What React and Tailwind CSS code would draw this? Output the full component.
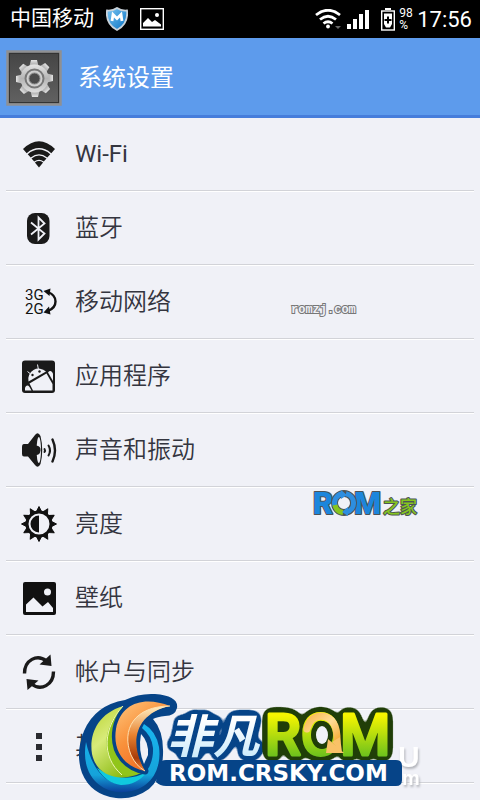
import React from "react";

const Wifi = () => (
  <svg viewBox="0 0 36 36" className="size-9" fill="#1a1a1a">
    <path d="M2 13 Q18 -2.500 34 13 L30.300 17.200 Q18 7 5.700 17.200 Z" />
    <path d="M6.700 18.200 Q18 9 29.300 18.200 L26.300 21.400 Q18 15 9.700 21.400 Z" />
    <path d="M10.500 22.400 Q18 16.800 25.500 22.400 L22.800 25.400 Q18 22 13.200 25.400 Z" />
    <path d="M13.900 26.400 Q18 23.600 22.100 26.400 L18 31.500 Z" />
  </svg>
);

const Bluetooth = () => (
  <svg viewBox="0 0 36 36" className="size-9">
    <rect x="6" y="3" width="22.500" height="31" rx="8" fill="#1a1a1a" />
    <path d="M10 12.500 L23.500 23.500 L17.500 29.500 V7.500 L23.500 13.500 L10 24.500" fill="none" stroke="#f0f1f7" strokeWidth="1.800" />
  </svg>
);

const Network = () => (
  <svg viewBox="0 0 36 36" className="size-9">
    <g fill="#111" fontFamily="Roboto, sans-serif" fontSize="15" fontWeight="400">
      <text x="4" y="16">3G</text>
      <text x="4" y="30">2G</text>
    </g>
    <path d="M27 8 Q34.500 11 34.500 17.500 Q34.500 24 27 27" fill="none" stroke="#111" strokeWidth="2.400" />
    <path d="M22.500 7 L29.500 4.500 L28.500 12 Z M22.500 28.500 L28 22.500 L29.500 30.500 Z" fill="#111" />
  </svg>
);

const Android = () => (
  <svg viewBox="0 0 36 36" className="size-9">
    <rect x="1" y="2.500" width="33" height="32.500" rx="3" fill="#1a1a1a" />
    <g fill="#f0f1f7">
      <path d="M7.500 23.500 A10.500 10.500 0 0 1 25 13.500 Z" />
      <path d="M8.500 25.500 L25.500 15.500 L31.500 26 V32.500 H12 Z" />
      <path d="M27 14.500 Q29 12 31 14 L32 15.500 V23 Z" />
      <path d="M4 29.500 Q6 26 8.500 29 L10.500 32.500 H4 Z" />
    </g>
    <path d="M17.500 12 L16.500 6.500 M9 15.500 L6.500 13.500" stroke="#f0f1f7" />
    <circle cx="11.500" cy="17" r="1.200" fill="#1a1a1a" />
    <circle cx="18.500" cy="13.500" r="1.200" fill="#1a1a1a" />
  </svg>
);

const Sound = () => (
  <svg viewBox="0 0 36 36" className="size-9">
    <path d="M1 15 Q1 12 3 12 H7 L14 3 Q17 -1 19.500 4 Q23 18 19.500 32 Q17 37 14 33 L7 24.500 H3 Q1 24.500 1 22 Z" fill="#1a1a1a" />
    <ellipse cx="17.800" cy="18" rx="2.200" ry="13" fill="#f0f1f7" />
    <path d="M15 13.500 Q20 14 19.500 18.500 Q19 23 15 23 Z" fill="#1a1a1a" />
    <g fill="none" stroke="#1a1a1a" strokeLinecap="round" strokeWidth="2">
      <path d="M23.500 17 Q24.500 18.500 23.500 20" />
      <path d="M27.500 13.500 Q30.500 18.500 27.500 23.500" />
      <path d="M31.500 7.500 Q36.500 18.500 31.500 29.500" strokeWidth="2.400" />
    </g>
  </svg>
);

const Brightness = () => (
  <svg viewBox="0 0 36 36" className="size-9">
    <g fill="#111">
      {[0, 30, 60, 90, 120, 150, 180, 210, 240, 270, 300, 330].map((a) => (
        <path key={a} d="M18 .500 L20.800 6 H15.200 Z" stroke="#111" strokeLinejoin="round" transform={`rotate(${a} 18 18)`} />
      ))}
    </g>
    <circle cx="18" cy="18" r="12" fill="none" stroke="#111" strokeWidth="3" />
    <path d="M18 9.500 A8.500 8.500 0 0 0 18 26.500 Z" fill="#111" />
  </svg>
);

const Wallpaper = () => (
  <svg viewBox="0 0 36 36" className="size-9">
    <rect x="2" y="2" width="33" height="33" rx="2" fill="#111" />
    <path d="M5 32 V24.500 L12.500 17.500 L21.500 26.500 L27 22 L32 28 V32 Z" fill="#f0f1f7" />
    <circle cx="26.500" cy="12" r="3.500" fill="#f0f1f7" />
  </svg>
);

const Sync = () => (
  <svg viewBox="0 0 36 36" className="size-9" fill="none" stroke="#1a1a1a" strokeWidth="3.400">
    <path d="M3.500 19.500 C3.500 6 16 -.5 25.500 7" />
    <path d="M32.500 17.500 C32.500 31 20 37.500 10.500 30" />
    <path d="M29.500 .500 L30.500 12 L18.500 10.500 Z M6.500 36 L5.500 25 L17.500 26.500 Z" fill="#1a1a1a" stroke="none" />
  </svg>
);

const More = () => (
  <svg viewBox="0 0 36 36" className="size-9" fill="#2a2b30">
    <rect x="15" y="5" width="6" height="6" />
    <rect x="15" y="16" width="6" height="6" />
    <rect x="15" y="27" width="6" height="6" />
  </svg>
);

const items = [
  ["Wi-Fi", Wifi, "font-normal"],
  ["蓝牙", Bluetooth, "font-[350]"],
  ["移动网络", Network, "font-[350]"],
  ["应用程序", Android, "font-[350]"],
  ["声音和振动", Sound, "font-[350]"],
  ["亮度", Brightness, "font-[350]"],
  ["壁纸", Wallpaper, "font-[350]"],
  ["帐户与同步", Sync, "font-[350]"],
  ["其他", More, "font-[350]"],
];

function StatusBar() {
  return (
    <div className="flex h-[38px] items-center bg-black pr-2 pl-2.5 text-white">
      <span className="text-[21px]">中国移动</span>
      <svg viewBox="0 0 22 24" className="ml-3 h-6 w-[22px]">
        <defs>
          <linearGradient id="shield" x2="1" y2="1">
            <stop stopColor="#7cc6f2" />
            <stop offset="1" stopColor="#0872c4" />
          </linearGradient>
        </defs>
        <path d="M1 3.500 Q7 4 11 1 Q15 4 21 3.500 Q22.500 17 11 23 Q-.5 17 1 3.500 Z" fill="url(#shield)" stroke="#c9d2da" strokeWidth="1.800" />
        <path d="M6 14 L7 7.500 L11 11.500 L15 7.500 L16 14" fill="none" stroke="#fff" strokeWidth="2.800" />
      </svg>
      <svg viewBox="0 0 24 22" className="ml-3 h-[22px] w-6">
        <rect x=".700" y=".700" width="22.600" height="20.600" fill="none" stroke="#fff" strokeWidth="1.400" />
        <path d="M3 18.500 V15 L8 10 L12 14 L15 12 L21 16.500 V18.500 Z" fill="#fff" />
        <circle cx="17" cy="7" r="2" fill="#fff" />
      </svg>
      <svg viewBox="0 0 26 20" className="ml-auto h-5 w-[26px]" fill="none" stroke="#fff" strokeWidth="2.800">
        <path d="M1 6 Q13 -3.500 25 6" />
        <path d="M5 10.500 Q13 4 21 10.500" />
        <path d="M8.500 14.500 Q13 11 17.500 14.500" />
        <circle cx="13" cy="17.500" r="1.900" fill="#fff" stroke="none" />
        <path d="M20 17 H26 L23 20 Z" fill="#666" stroke="none" />
      </svg>
      <svg viewBox="0 0 22 20" className="ml-1.5 h-5 w-[22px]" fill="#fff">
        <rect y="15" width="4" height="5" />
        <rect x="6" y="10" width="4" height="10" />
        <rect x="12" y="5" width="4" height="15" />
        <rect x="18" y="1" width="4" height="19" />
      </svg>
      <svg viewBox="0 0 14 24" className="ml-3 h-6 w-3.5">
        <rect x="4" y="1" width="6" height="2" fill="#fff" />
        <rect x=".700" y="4" width="12.600" height="19" fill="none" stroke="#fff" strokeWidth="1.400" />
        <path d="M3 6.500 H11 V17 L9 20.500 H5 L3 17 Z" fill="#fff" />
        <path d="M7 9.500 V16.500 M3.500 13 H10.500" stroke="#000" strokeWidth="2" />
      </svg>
      <span className="ml-1 flex w-3.5 flex-col text-xs leading-3">
        <span>98</span>
        <span>%</span>
      </span>
      <span className="ml-1 font-[Roboto,sans-serif] text-[22px]">17:56</span>
    </div>
  );
}

function GearIcon() {
  return (
    <svg viewBox="0 0 56 56" className="size-14">
      <defs>
        <linearGradient id="tile" x2="0" y2="1">
          <stop stopColor="#444" />
          <stop offset="1" stopColor="#626262" />
        </linearGradient>
        <linearGradient id="gear" x2="0" y2="1">
          <stop stopColor="#e4e4e4" />
          <stop offset=".5" stopColor="#b4b4b4" />
          <stop offset="1" stopColor="#dedede" />
        </linearGradient>
      </defs>
      <rect x="1.500" y="1.500" width="53" height="53" fill="url(#tile)" stroke="#8f9092" strokeWidth="2.500" />
      <rect x="3.500" y="3.500" width="49" height="49" fill="none" stroke="#333" />
      <g fill="url(#gear)">
        {[0, 45, 90, 135, 180, 225, 270, 315].map((a) => (
          <path key={a} d="M25 10 H31 L33 18 H23 Z" transform={`rotate(${a} 28.5 28.5)`} />
        ))}
        <circle cx="28.500" cy="28.500" r="14" />
      </g>
      <circle cx="28.500" cy="28.500" r="9" fill="#cfcfcf" stroke="#777" strokeWidth="2" />
      <circle cx="28.500" cy="28.500" r="5.500" fill="#4b4b4b" stroke="#8a8a8a" />
    </svg>
  );
}

function RomHome() {
  return (
    <svg viewBox="0 -6 112 46" className="pointer-events-none absolute top-[481px] left-[310px] h-[46px] w-28">
      <g strokeLinejoin="round" paintOrder="stroke" stroke="#4c5357" strokeWidth="2">
        <text x="3" y="27" fontFamily="Roboto, sans-serif" fontWeight="900" fontSize="31" fill="#1c86dc">R</text>
        <text x="44" y="27" fontFamily="Roboto, sans-serif" fontWeight="900" fontSize="31" fill="#1c86dc">M</text>
        <circle cx="34" cy="16" r="9.500" fill="none" strokeWidth="7" />
        <text x="73" y="26" fontFamily="'Noto Sans CJK SC', sans-serif" fontWeight="500" fontSize="17" fill="#86c51f">之家</text>
      </g>
      <path d="M32 6.700 A9.500 9.500 0 0 0 25 19" fill="none" stroke="#2d8ee0" strokeWidth="5" />
      <path d="M25 18 A9.500 9.500 0 0 0 33 25.500" fill="none" stroke="#86c51f" strokeWidth="5" />
      <path d="M36 6.700 A9.500 9.500 0 0 1 36 25.300" fill="none" stroke="#2d8ee0" strokeWidth="5" />
      <path d="M31 3 L37 8 L31 12 Z M38 20 L32 25 L38 29 Z" fill="#2d8ee0" />
    </svg>
  );
}

function CrskyLogo() {
  return (
    <svg viewBox="76 690 350 110" className="pointer-events-none absolute top-[690px] left-[76px] h-[110px] w-[350px]">
      <defs>
        <linearGradient id="orange" x1="0" y1="0" x2=".6" y2="1">
          <stop stopColor="#ffc77e" />
          <stop offset=".5" stopColor="#f9923c" />
          <stop offset="1" stopColor="#ef6a22" />
        </linearGradient>
        <linearGradient id="orangeInner" x2="0" y2="1">
          <stop stopColor="#fff0c4" />
          <stop offset=".45" stopColor="#e8812e" />
          <stop offset=".8" stopColor="#a83b09" />
          <stop offset="1" stopColor="#f58a3c" />
        </linearGradient>
        <linearGradient id="lime" x2=".6" y2="1">
          <stop stopColor="#b9d32e" />
          <stop offset=".45" stopColor="#d8eb7a" />
          <stop offset="1" stopColor="#8aba12" />
        </linearGradient>
        <linearGradient id="ring" x2="0" y2="1">
          <stop stopColor="#19b6ef" />
          <stop offset=".75" stopColor="#15a3da" />
          <stop offset="1" stopColor="#0a3f9a" />
        </linearGradient>
        <linearGradient id="ice" x2="0" y2="1">
          <stop offset=".3" stopColor="#fff" />
          <stop offset="1" stopColor="#bfe6fa" />
        </linearGradient>
        <linearGradient id="leaf" x2="0" y2="1">
          <stop offset=".2" stopColor="#f6f500" />
          <stop offset=".8" stopColor="#6fc21c" />
        </linearGradient>
        <linearGradient id="gold" x2="1" y2="1">
          <stop stopColor="#f8b952" />
          <stop offset=".5" stopColor="#ffdc96" />
          <stop offset="1" stopColor="#f4ab35" />
        </linearGradient>
        <filter id="navyOutline" x="-20%" y="-20%" width="140%" height="140%" colorInterpolationFilters="sRGB">
          <feGaussianBlur in="SourceAlpha" stdDeviation="4" />
          <feComponentTransfer result="grown">
            <feFuncA type="linear" slope="20" intercept="-1.200" />
          </feComponentTransfer>
          <feFlood floodColor="#064488" />
          <feComposite in2="grown" operator="in" />
          <feMerge>
            <feMergeNode />
            <feMergeNode in="SourceGraphic" />
          </feMerge>
        </filter>
        <filter id="greenOutline" x="-20%" y="-20%" width="140%" height="140%" colorInterpolationFilters="sRGB">
          <feGaussianBlur in="SourceAlpha" stdDeviation="4" />
          <feComponentTransfer result="grown">
            <feFuncA type="linear" slope="20" intercept="-1.500" />
          </feComponentTransfer>
          <feFlood floodColor="#203e08" />
          <feComposite in2="grown" operator="in" />
          <feMerge>
            <feMergeNode />
            <feMergeNode in="SourceGraphic" />
          </feMerge>
        </filter>
      </defs>

      <g fontFamily="'Liberation Sans', Arial, sans-serif" fontWeight="700" fill="#fff" className="drop-shadow-[1px_2px_1px_#b0b2b8]">
        <text x="398" y="767" fontSize="30">U</text>
        <text x="402" y="785" fontSize="20">m</text>
      </g>

      <path
        d="M125 700 Q139 693 155 694 Q179 696 177 708 Q175 716 165 716 Q157 717 153 719 Q164 731 163 755 Q162 778 149 789 Q134 800 116 798 Q91 795 82 773 Q75 753 84 731 Q95 705 125 700 Z"
        fill="#064488"
      />
      <path d="M86 742 C80 775 101 794 125 792 C151 790 162 769 159 747 Q156 731 144 724 L142 728 Q152 736 153 748 C154 769 140 783 122 784 C103 784 91 765 86 742 Z" fill="url(#ring)" />
      <path d="M97 768 Q123 785 147 772 Q137 785 121 785 Q106 783 97 768 Z" fill="#10c9de" />
      <path d="M141 734 Q149 742 148 755 L144 764 Q138 750 141 734 Z" fill="#f0f1f7" />
      <path d="M123 706 C97 714 89 735 92 754 C97 778 122 782 141 773 C118 771 102 736 123 706 Z" fill="url(#lime)" />
      <path d="M123 706 C103 727 99 756 122 775 Q132 777 141 773 C119 767 106 735 123 706 Z" fill="#91c51a" />
      <path d="M123 706 C104 727 100 756 122 775" fill="none" stroke="#f0f7b8" />
      <path d="M170 706 C145 696 121 702 116 729 C112 754 128 768 145 771 C126 750 119 721 170 706 Z" fill="#064488" stroke="#064488" strokeWidth="7" strokeLinejoin="round" />
      <path d="M170 706 C145 696 121 702 116 729 C112 754 128 768 145 771 C128 745 133 713 170 706 Z" fill="url(#orange)" />
      <path d="M170 706 C134 706 121 730 131 755 Q136 766 145 771 C129 744 134 714 170 706 Z" fill="url(#orangeInner)" />
      <path d="M170 706 C134 706 121 730 131 755 Q136 766 145 771" fill="none" stroke="#ffe0b0" />

      <text x="167" y="753" fontFamily="'Noto Sans CJK SC', sans-serif" fontWeight="700" fontStyle="italic" fontSize="46" fill="url(#ice)" filter="url(#navyOutline)">
        非凡
      </text>
      <g filter="url(#greenOutline)">
        <text x="265" y="755" fontFamily="Roboto, sans-serif" fontWeight="500" fontSize="57" fill="url(#leaf)" stroke="url(#leaf)" strokeWidth="3" strokeLinejoin="round">
          ROM
        </text>
      </g>
      <ellipse cx="322" cy="735" rx="11" ry="14" fill="#203e08" />
      <ellipse cx="322" cy="735" rx="6" ry="9" fill="#f0f1f7" />
      <path d="M307 729 Q310 716 322 716 Q338 718 337 742" fill="none" stroke="url(#gold)" strokeWidth="7" strokeLinecap="round" />
      <path d="M328 739 L344 753 L326 753 Z M332 742 L340 737 L342 752 Z" fill="#fac267" />
      <path d="M158 766 Q160 760 166 760 H396 Q402 760 402 766 V780 Q402 786 396 786 H166 Q160 786 156 782 Z" fill="#064488" />
      <text x="169" y="781" fontFamily="'DejaVu Sans', sans-serif" fontWeight="700" fontSize="23" fill="#fff">
        ROM.CRSKY.COM
      </text>
    </svg>
  );
}

export default function App() {
  return (
    <div className="relative min-h-screen overflow-hidden bg-[#f0f1f7] font-[Roboto,'Noto_Sans_CJK_SC',sans-serif]">
      <StatusBar />
      <header className="flex h-20 items-center gap-4 border-b-3 border-[#467ddb] bg-[#5d9bec] pt-0.5 pl-1.5">
        <GearIcon />
        <h1 className="text-2xl text-white">系统设置</h1>
      </header>
      <ul className="-mt-px px-1.5">
        {items.map(([label, Icon, weight]) => (
          <li key={label} className="border-b border-[#d2d3d8] shadow-[0_1px_0_#fff]">
            <button type="button" className="flex h-[73px] w-full items-center gap-[18px] pt-px pl-[15px] text-left text-2xl text-[#34353f]">
              <Icon />
              <span className={weight}>{label}</span>
            </button>
          </li>
        ))}
      </ul>
      <span className="pointer-events-none absolute top-[302px] left-[291px] font-['Liberation_Mono',monospace] text-xs leading-4 font-bold text-[#f0f1f7] [-webkit-text-stroke:2px_#777] [paint-order:stroke]">
        romzj.com
      </span>
      <RomHome />
      <CrskyLogo />
    </div>
  );
}
